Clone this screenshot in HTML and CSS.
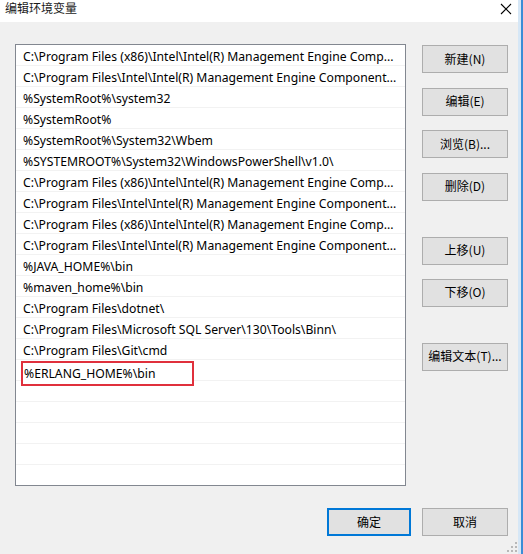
FILE: index.html
```html
<!DOCTYPE html>
<html lang="zh-CN">
<head>
<meta charset="utf-8">
<title>编辑环境变量</title>
<link rel="stylesheet" href="styles.css">
</head>
<body>
<div class="window">
  <div class="frame">
    <div class="titlebar">
      <span class="title">编辑环境变量</span>
      <span class="close" aria-label="关闭">
        <svg width="12" height="12" viewBox="0 0 12 12"><path d="M1 1 L11 11 M11 1 L1 11" stroke="#000" stroke-width="1.1" fill="none"/></svg>
      </span>
    </div>
    <div class="content">
      <div class="main">
        <div class="list">
          <div class="row">C:\Program Files (x86)\Intel\Intel(R) Management Engine Comp...</div>
          <div class="row">C:\Program Files\Intel\Intel(R) Management Engine Component...</div>
          <div class="row">%SystemRoot%\system32</div>
          <div class="row">%SystemRoot%</div>
          <div class="row">%SystemRoot%\System32\Wbem</div>
          <div class="row">%SYSTEMROOT%\System32\WindowsPowerShell\v1.0\</div>
          <div class="row">C:\Program Files (x86)\Intel\Intel(R) Management Engine Comp...</div>
          <div class="row">C:\Program Files\Intel\Intel(R) Management Engine Component...</div>
          <div class="row">C:\Program Files (x86)\Intel\Intel(R) Management Engine Comp...</div>
          <div class="row">C:\Program Files\Intel\Intel(R) Management Engine Component...</div>
          <div class="row">%JAVA_HOME%\bin</div>
          <div class="row">%maven_home%\bin</div>
          <div class="row">C:\Program Files\dotnet\</div>
          <div class="row">C:\Program Files\Microsoft SQL Server\130\Tools\Binn\</div>
          <div class="row">C:\Program Files\Git\cmd</div>
          <div class="row editing"><div class="edit">%ERLANG_HOME%\bin</div></div>
          <div class="row"></div>
          <div class="row"></div>
          <div class="row"></div>
          <div class="row"></div>
          <div class="row last"></div>
        </div>
        <div class="side">
          <div class="group">
            <button class="btn">新建(N)</button>
            <button class="btn">编辑(E)</button>
            <button class="btn">浏览(B)...</button>
            <button class="btn">删除(D)</button>
          </div>
          <div class="group tight">
            <button class="btn">上移(U)</button>
            <button class="btn">下移(O)</button>
          </div>
          <div class="group">
            <button class="btn">编辑文本(T)...</button>
          </div>
        </div>
      </div>
      <div class="footer">
        <button class="btn default">确定</button>
        <button class="btn">取消</button>
      </div>
    </div>
    <span class="grip">
      <svg width="10" height="10" viewBox="0 0 10 10" fill="#b8b8b8">
        <rect x="8" y="0" width="2" height="2"/>
        <rect x="4" y="4" width="2" height="2"/><rect x="8" y="4" width="2" height="2"/>
        <rect x="0" y="8" width="2" height="2"/><rect x="4" y="8" width="2" height="2"/><rect x="8" y="8" width="2" height="2"/>
      </svg>
    </span>
  </div>
</div>
</body>
</html>
```
FILE: styles.css
```css
* { box-sizing: border-box; }
html, body { margin: 0; padding: 0; }
body {
  width: 523px;
  height: 554px;
  overflow: hidden;
  font-family: "Noto Sans CJK SC", "Noto Sans", sans-serif;
  font-size: 12px;
  color: #000;
  background: #f0f0f0;
}
.window {
  width: 523px;
  height: 554px;
  border-right: 2px solid #3a8dd6;
}
.frame {
  position: relative;
  height: 100%;
  border-right: 3px solid #d6e7f6;
  background: #f0f0f0;
}
.titlebar {
  height: 22px;
  background: #fff;
  display: flex;
  align-items: center;
  justify-content: space-between;
  padding: 0 6px 0 5px;
}
.title {
  font-size: 12px;
  line-height: 16px;
  margin-top: -6px;
  color: #1a1a1a;
}
.close {
  display: flex;
  width: 12px;
  height: 12px;
  margin-top: -4px;
}
.content {
  padding: 22px 10px 0 15px;
}
.main {
  display: flex;
}
.list {
  width: 391px;
  height: 442px;
  border: 1px solid #828790;
  background: #fff;
  overflow: hidden;
}
.row {
  position: relative;
  height: 21px;
  border-bottom: 1px solid #f2f2f2;
  padding: 3px 0 0 7px;
  line-height: 18px;
  white-space: nowrap;
  font-family: "Noto Sans", "Noto Sans CJK SC", sans-serif;
  font-size: 12.2px;
  color: #000;
}
.row.last { border-bottom: none; }
.row.editing { overflow: visible; z-index: 1; }
.edit {
  position: absolute;
  left: 5px;
  top: 1px;
  width: 173px;
  height: 25px;
  border: 2px solid #e0303c;
  padding: 1px 0 0 1px;
  line-height: 20px;
  background: #fff;
}
.side {
  margin-left: 16px;
  padding-top: 1px;
  display: flex;
  flex-direction: column;
  gap: 36px;
}
.group {
  display: flex;
  flex-direction: column;
  gap: 14.67px;
}
.group.tight { gap: 14px; }
.btn {
  width: 86px;
  height: 28px;
  padding: 0 0 1px;
  border: 1px solid #adadad;
  background: #e1e1e1;
  font-family: "Noto Sans CJK SC", "Noto Sans", sans-serif;
  font-size: 12px;
  color: #000;
  line-height: 24px;
}
.footer {
  display: flex;
  justify-content: flex-end;
  gap: 11px;
  margin-top: 22px;
}
.btn.default {
  width: 84px;
  border: 2px solid #0078d7;
}
.grip {
  position: absolute;
  right: 1px;
  bottom: 2px;
  display: flex;
}
```
